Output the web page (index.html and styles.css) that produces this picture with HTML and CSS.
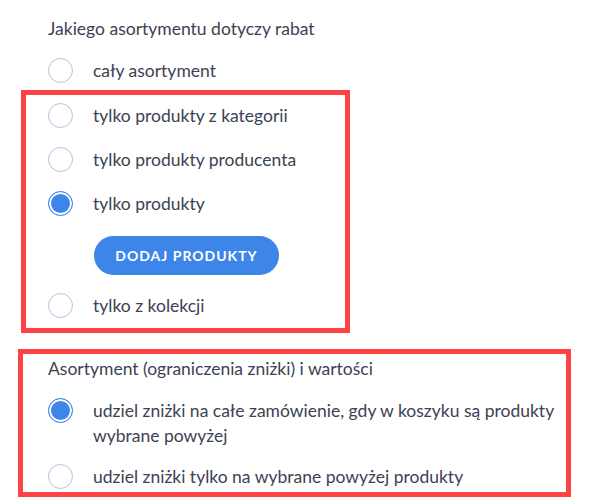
FILE: index.html
```html
<!DOCTYPE html>
<html lang="pl">
  <head>
    <meta charset="UTF-8" />
    <meta name="viewport" content="width=device-width, initial-scale=1.0" />
    <title>Rabat - asortyment</title>
    <link rel="stylesheet" href="styles.css">
  </head>
  <body>
    <div class="page">
      <p class="group-title">Jakiego asortymentu dotyczy rabat</p>

      <label class="option option-first">
        <input type="radio" name="scope" />
        <span class="option-text">cały asortyment</span>
      </label>

      <!-- zaznaczone opcje -->
      <div class="marked marked-scope">
        <label class="option">
          <input type="radio" name="scope" />
          <span class="option-text">tylko produkty z kategorii</span>
        </label>
        <label class="option">
          <input type="radio" name="scope" />
          <span class="option-text">tylko produkty producenta</span>
        </label>
        <label class="option">
          <input type="radio" name="scope" checked />
          <span class="option-text">tylko produkty</span>
        </label>

        <button type="button" class="add-button">Dodaj produkty</button>

        <label class="option option-after-button">
          <input type="radio" name="scope" />
          <span class="option-text">tylko z kolekcji</span>
        </label>
      </div>

      <div class="marked marked-limits">
        <p class="group-title">Asortyment (ograniczenia zniżki) i wartości</p>

        <label class="option option-first">
          <input type="radio" name="limits" checked />
          <span class="option-text option-wide">udziel zniżki na całe zamówienie, gdy w koszyku są produkty wybrane powyżej</span>
        </label>
        <label class="option">
          <input type="radio" name="limits" />
          <span class="option-text">udziel zniżki tylko na wybrane powyżej produkty</span>
        </label>
      </div>
    </div>
  </body>
</html>
```

FILE: styles.css
```css
body {
  margin: 0;
  font-family: Lato, "Liberation Sans", sans-serif;
  font-size: 17.5px;
  line-height: 25px;
  color: #3d4252;
  background-color: #fff;
}

.page {
  padding: 16px 0 0 48px;
}

.group-title {
  margin: 0;
}

.option {
  display: flex;
  align-items: flex-start;
  gap: 20px;
  margin-top: 19px;
  cursor: pointer;
}

.option-first {
  margin-top: 17px;
}

.marked .option:first-child {
  margin-top: 0;
}

.option input {
  appearance: none;
  -webkit-appearance: none;
  flex: none;
  width: 25px;
  height: 25px;
  margin: 0;
  border: 1px solid #b9c1da;
  border-radius: 50%;
  background-color: #fff;
}

.option input:checked {
  border-color: #3d85e8;
  background-color: #3d85e8;
  box-shadow: inset 0 0 0 2px #fff;
}

.option-wide {
  max-width: 470px;
}

.add-button {
  display: block;
  width: 185px;
  height: 39px;
  margin: 20px 0 0 46px;
  padding: 0;
  border: none;
  border-radius: 20px;
  background-color: #3d85e8;
  color: #fff;
  font-family: inherit;
  font-size: 14px;
  font-weight: bold;
  letter-spacing: 1px;
  text-transform: uppercase;
  cursor: pointer;
}

.option-after-button {
  margin-top: 18px;
}

.marked {
  border: 5px solid #ff4343;
}

.marked-scope {
  width: 297px;
  margin: 7px 0 0 -27px;
  padding: 8px 0 10px 22px;
}

.marked-limits {
  width: 518px;
  margin: 16px 0 0 -30px;
  padding: 2px 0 3px 25px;
}

.marked-limits .option-first {
  margin-top: 17px;
}

.marked-limits .option + .option {
  margin-top: 16px;
}
```
